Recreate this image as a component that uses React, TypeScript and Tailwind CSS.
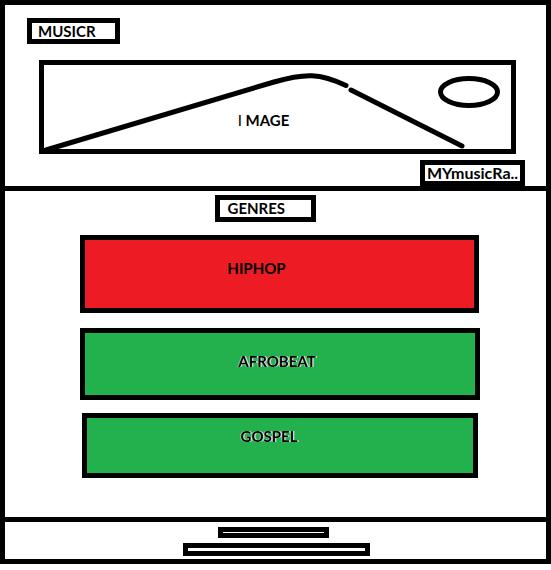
import React from "react";

type Genre = { name: string; box: string; label: string };

const genres: Genre[] = [
  {
    name: "HIPHOP",
    box: "mr-px h-[78px] bg-[#ed1c24] pt-5 pr-[46px]",
    label: "",
  },
  {
    name: "AFROBEAT",
    box: "mt-[15px] h-[72px] bg-[#22b14c] pt-5 pr-1.5",
    label: "[text-shadow:1px_0_#fff,-1px_0_#ffffff80]",
  },
  {
    name: "GOSPEL",
    box: "mt-[13px] mr-0.5 ml-0.5 h-[65px] bg-[#22b14c] pt-2.5 pr-[22px]",
    label: "[text-shadow:1px_0_#fff,-1px_0_#ffffff80]",
  },
];

function Landscape() {
  return (
    <svg
      viewBox="44 65 467 84"
      preserveAspectRatio="none"
      className="col-start-1 row-start-1 h-[84px] w-full overflow-visible"
      fill="none"
      stroke="#000"
      strokeWidth="5"
      strokeLinecap="round"
      aria-hidden="true"
    >
      <path d="M46 150 L274 82 C305 73 320 73 346 85.5" />
      <path d="M351 90 L462 146" />
      <ellipse cx="469" cy="92" rx="28.5" ry="13.5" />
    </svg>
  );
}

export default function App() {
  return (
    <div className="border-5 border-black bg-white font-['Lato',sans-serif] text-[15px] leading-4 font-bold text-black">
      <header className="flex flex-col border-b-5 border-black pt-[13px]">
        <h1 className="ml-[22px] w-[93px] border-5 border-black pl-1.5">
          <a href="#">MUSICR</a>
        </h1>
        <figure className="mt-4 mr-[30px] ml-[34px] grid border-5 border-black">
          <Landscape />
          <figcaption className="col-start-1 row-start-1 mt-[47px] mr-[28px] justify-self-center whitespace-pre">
            <span className="font-normal">I</span> MAGE
          </figcaption>
        </figure>
        <a
          href="#"
          className="mt-1.5 mr-[21px] w-[105px] self-end overflow-hidden border-5 border-black pl-0.5 text-[16px] leading-4 whitespace-nowrap"
        >
          MYmusicRa..
        </a>
      </header>

      <main className="pt-1 pr-[66px] pb-[39px] pl-[75px]">
        <div className="flex justify-center pr-[30px]">
          <h2 className="h-[27px] w-[101px] border-5 border-black pl-2">
            GENRES
          </h2>
        </div>
        <div className="mt-[13px] flex flex-col">
          {genres.map((genre) => (
            <button
              key={genre.name}
              type="button"
              className={`flex items-start justify-center border-5 border-black ${genre.box}`}
            >
              <span className={genre.label}>{genre.name}</span>
            </button>
          ))}
        </div>
      </main>

      <footer className="flex flex-col items-center gap-[5px] border-t-5 border-black pt-[5px] pb-[3px]">
        <div className="mr-1 h-[11px] w-[111px] border-5 border-black" />
        <div className="ml-0.5 h-[13px] w-[187px] border-5 border-black" />
      </footer>
    </div>
  );
}
